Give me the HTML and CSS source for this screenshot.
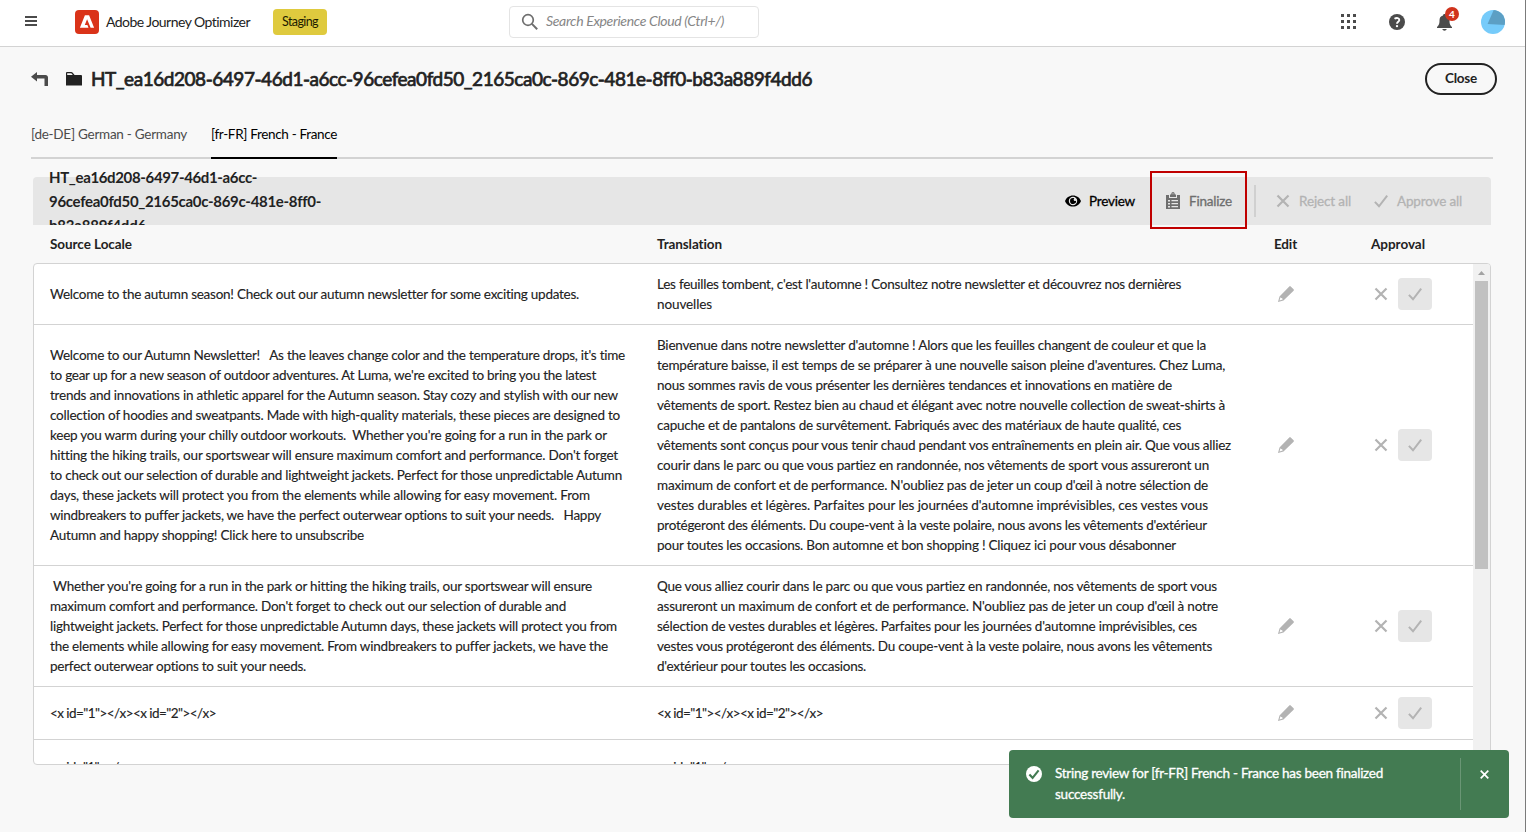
FILE: index.html
```html
<!DOCTYPE html>
<html lang="en">
<head>
<meta charset="utf-8">
<title>Adobe Journey Optimizer</title>
<link rel="stylesheet" href="styles.css">
</head>
<body>
<svg class="defs" width="0" height="0">
  <symbol id="pencil" viewBox="0 0 18 18"><path d="M12.300 1.400q.7-.7 1.400 0l2.900 2.900q.7.7 0 1.400L6.500 15.600 1 17l1.500-5.600zM3.500 12.300l-1 3.200 3.200-.9-.5-1.300-1-.2z" fill-rule="evenodd"/></symbol>
  <symbol id="cross" viewBox="0 0 14 14"><path d="M1.500 1.500l11 11M12.500 1.500l-11 11" fill="none" stroke="currentColor" stroke-width="2.200"/></symbol>
  <symbol id="check" viewBox="0 0 14 14"><path d="M.9 7.900l4.100 4.400L13.200 1.700" fill="none" stroke="currentColor" stroke-width="2"/></symbol>
</svg>
<div class="app">
  <header class="topbar">
    <div class="brand">
      <svg class="menu" width="12" height="11" viewBox="0 0 12 11"><path d="M0 1h12M0 5h12M0 9h12" stroke="#4b4b4b" stroke-width="2"/></svg>
      <svg class="logo" width="24" height="24" viewBox="0 0 24 24"><rect width="24" height="24" rx="4" fill="#da3319"/><path d="M9.900 5.200h4.200l5 12.500h-3.500L12.100 9.300l-2.300 5.600h2.600l1.100 2.800H4.900z" fill="#fff"/></svg>
      <span class="product" data-w="144">Adobe Journey Optimizer</span>
      <span class="badge"><span data-w="36">Staging</span></span>
    </div>
    <div class="search">
      <svg width="18" height="18" viewBox="0 0 18 18" fill="none" stroke="#6e6e6e" stroke-width="1.700"><circle cx="7" cy="7" r="5.300"/><path d="M10.900 10.900l5.300 5.300" stroke-width="2"/></svg>
      <span data-w="178">Search Experience Cloud (Ctrl+/)</span>
    </div>
    <div class="tools">
      <svg width="15" height="15" viewBox="0 0 15 15" fill="#4b4b4b"><path d="M0 0h3v3H0zM6 0h3v3H6zM12 0h3v3h-3zM0 6h3v3H0zM6 6h3v3H6zM12 6h3v3h-3zM0 12h3v3H0zM6 12h3v3H6zM12 12h3v3h-3z"/></svg>
      <span class="help"><svg width="16" height="16" viewBox="0 0 16 16"><circle cx="8" cy="8" r="8" fill="#4b4b4b"/><path d="M5.500 4.800C7.700 3.300 10.300 3.900 10.300 6c0 1.700-2.300 1.900-2.300 3.700" fill="none" stroke="#fff" stroke-width="1.900"/><circle cx="8" cy="12.100" r="1.200" fill="#fff"/></svg></span>
      <span class="bell"><svg width="16" height="17" viewBox="0 0 16 17" fill="#4b4b4b"><path d="M7.500 0c1 0 1.500.7 1.500 1.500 2.600.6 3.500 2.700 3.500 5 0 4 .8 4.800 2.500 6.500v1H0v-1c1.700-1.700 2.500-2.500 2.500-6.500 0-2.300.9-4.400 3.500-5C6 .7 6.500 0 7.500 0zM5.300 15h4.400c-.5 2.200-3.900 2.200-4.400 0z"/></svg><b class="count">4</b></span>
      <svg class="avatar" width="24" height="24" viewBox="0 0 24 24"><defs><clipPath id="av"><circle cx="12" cy="12" r="12"/></clipPath></defs><g clip-path="url(#av)"><path fill="#76cbfa" d="M0 0h24v24H0z"/><path fill="#5c9fc4" d="M12.700 0H24v15L6.600 14z"/></g></svg>
    </div>
  </header>

  <div class="page-head">
    <svg class="back" width="18" height="16" viewBox="0 0 18 16" fill="#4b4b4b"><path d="M6 0v3h8.500c1.500 0 2.500 1 2.500 2.500V14h-3.500V6.500H6v3L0 4.800z"/></svg>
    <svg class="folder" width="16" height="14" viewBox="0 0 16 14" fill="#222"><path d="M0 3V1Q0 0 1 0h4.500q.5 0 1 .5L8.600 3H15q1 0 1 1v9.400H0z"/><path d="M1.200 3V1.200h4.100L6.800 3z" fill="#f8f8f8"/></svg>
    <h1><span data-w="721">HT_ea16d208-6497-46d1-a6cc-96cefea0fd50_2165ca0c-869c-481e-8ff0-b83a889f4dd6</span></h1>
    <button class="close"><span data-w="32">Close</span></button>
  </div>

  <nav class="tabs">
    <a class="tab"><span data-w="156">[de-DE] German - Germany</span></a>
    <a class="tab active"><span data-w="126">[fr-FR] French - France</span></a>
  </nav>

  <section class="panel">
    <div class="toolbar">
      <h2><span data-w="208">HT_ea16d208-6497-46d1-a6cc-</span><br><span data-w="272">96cefea0fd50_2165ca0c-869c-481e-8ff0-</span><br><span data-w="97">b83a889f4dd6</span></h2>
      <div class="actions">
        <span class="action preview"><svg width="16" height="12" viewBox="0 0 16 12"><path fill-rule="evenodd" d="M8 .4c3.800 0 6.700 2.200 8 5.600-1.300 3.400-4.200 5.600-8 5.600S1.300 9.400 0 6C1.300 2.600 4.200.4 8 .4zm0 1.400a4.200 4.200 0 1 0 0 8.400 4.200 4.200 0 0 0 0-8.400z"/><path d="M8 3c.5 0 .9.100 1.300.3A1.600 1.600 0 0 0 9.600 6c.6.300 1.200 0 1.400-.5A3 3 0 1 1 8 3z"/></svg><span data-w="46">Preview</span></span>
        <span class="action finalize"><svg width="14" height="17" viewBox="0 0 14 17"><path fill-rule="evenodd" d="M0 3h3v3h8V3h3v14H0zM2 8v1.500h2V8zm3.500 0v1.300H12V8zM2 11v1.500h2V11zm3.500 0v1.300H12V11zM2 14v1.500h2V14zm3.500 0v1.300H12V14z"/><path fill-rule="evenodd" d="M4 5V2.500h1.200c.1-3.300 3.500-3.300 3.600 0H10V5zm2.300-2.700h1.400c-.1-1.300-1.300-1.300-1.400 0z"/></svg><span data-w="43">Finalize</span></span>
        <i class="divider"></i>
        <span class="action reject"><svg width="14" height="14"><use href="#cross"/></svg><span data-w="52">Reject all</span></span>
        <span class="action approve"><svg width="14" height="14"><use href="#check"/></svg><span data-w="65">Approve all</span></span>
      </div>
      <div class="highlight"></div>
    </div>

    <div class="thead">
      <span><span data-w="82">Source Locale</span></span><span><span data-w="65">Translation</span></span><span><span data-w="23">Edit</span></span><span><span data-w="54">Approval</span></span>
    </div>

    <div class="table">
      <div class="rows">
        <div class="row">
          <p><span data-w="529">Welcome to the autumn season! Check out our autumn newsletter for some exciting updates.</span></p>
          <p><span data-w="524">Les feuilles tombent, c'est l'automne ! Consultez notre newsletter et découvrez nos dernières</span><br><span data-w="55">nouvelles</span></p>
          <svg class="edit" width="18" height="18"><use href="#pencil"/></svg>
          <div class="approval"><svg width="14" height="14"><use href="#cross"/></svg><span class="ok"><svg width="14" height="14"><use href="#check"/></svg></span></div>
        </div>
        <div class="row">
          <p><span data-w="575">Welcome to our Autumn Newsletter! &nbsp; As the leaves change color and the temperature drops, it's time</span><br><span data-w="546">to gear up for a new season of outdoor adventures. At Luma, we're excited to bring you the latest</span><br><span data-w="568">trends and innovations in athletic apparel for the Autumn season. Stay cozy and stylish with our new</span><br><span data-w="570">collection of hoodies and sweatpants. Made with high-quality materials, these pieces are designed to</span><br><span data-w="557">keep you warm during your chilly outdoor workouts. &nbsp;Whether you're going for a run in the park or</span><br><span data-w="568">hitting the hiking trails, our sportswear will ensure maximum comfort and performance. Don't forget</span><br><span data-w="572">to check out our selection of durable and lightweight jackets. Perfect for those unpredictable Autumn</span><br><span data-w="540">days, these jackets will protect you from the elements while allowing for easy movement. From</span><br><span data-w="551">windbreakers to puffer jackets, we have the perfect outerwear options to suit your needs. &nbsp; Happy</span><br><span data-w="314">Autumn and happy shopping! Click here to unsubscribe</span></p>
          <p><span data-w="549">Bienvenue dans notre newsletter d'automne ! Alors que les feuilles changent de couleur et que la</span><br><span data-w="568">température baisse, il est temps de se préparer à une nouvelle saison pleine d'aventures. Chez Luma,</span><br><span data-w="515">nous sommes ravis de vous présenter les dernières tendances et innovations en matière de</span><br><span data-w="568">vêtements de sport. Restez bien au chaud et élégant avec notre nouvelle collection de sweat-shirts à</span><br><span data-w="524">capuche et de pantalons de survêtement. Fabriqués avec des matériaux de haute qualité, ces</span><br><span data-w="574">vêtements sont conçus pour vous tenir chaud pendant vos entraînements en plein air. Que vous alliez</span><br><span data-w="552">courir dans le parc ou que vous partiez en randonnée, nos vêtements de sport vous assureront un</span><br><span data-w="551">maximum de confort et de performance. N'oubliez pas de jeter un coup d'œil à notre sélection de</span><br><span data-w="551">vestes durables et légères. Parfaites pour les journées d'automne imprévisibles, ces vestes vous</span><br><span data-w="550">protégeront des éléments. Du coupe-vent à la veste polaire, nous avons les vêtements d'extérieur</span><br><span data-w="519">pour toutes les occasions. Bon automne et bon shopping ! Cliquez ici pour vous désabonner</span></p>
          <svg class="edit" width="18" height="18"><use href="#pencil"/></svg>
          <div class="approval"><svg width="14" height="14"><use href="#cross"/></svg><span class="ok"><svg width="14" height="14"><use href="#check"/></svg></span></div>
        </div>
        <div class="row">
          <p><span data-w="542">&nbsp;Whether you're going for a run in the park or hitting the hiking trails, our sportswear will ensure</span><br><span data-w="516">maximum comfort and performance. Don't forget to check out our selection of durable and</span><br><span data-w="567">lightweight jackets. Perfect for those unpredictable Autumn days, these jackets will protect you from</span><br><span data-w="558">the elements while allowing for easy movement. From windbreakers to puffer jackets, we have the</span><br><span data-w="256">perfect outerwear options to suit your needs.</span></p>
          <p><span data-w="560">Que vous alliez courir dans le parc ou que vous partiez en randonnée, nos vêtements de sport vous</span><br><span data-w="561">assureront un maximum de confort et de performance. N'oubliez pas de jeter un coup d'œil à notre</span><br><span data-w="540">sélection de vestes durables et légères. Parfaites pour les journées d'automne imprévisibles, ces</span><br><span data-w="555">vestes vous protégeront des éléments. Du coupe-vent à la veste polaire, nous avons les vêtements</span><br><span data-w="209">d'extérieur pour toutes les occasions.</span></p>
          <svg class="edit" width="18" height="18"><use href="#pencil"/></svg>
          <div class="approval"><svg width="14" height="14"><use href="#cross"/></svg><span class="ok"><svg width="14" height="14"><use href="#check"/></svg></span></div>
        </div>
        <div class="row">
          <p><span data-w="166">&lt;x id="1"&gt;&lt;/x&gt;&lt;x id="2"&gt;&lt;/x&gt;</span></p>
          <p><span data-w="166">&lt;x id="1"&gt;&lt;/x&gt;&lt;x id="2"&gt;&lt;/x&gt;</span></p>
          <svg class="edit" width="18" height="18"><use href="#pencil"/></svg>
          <div class="approval"><svg width="14" height="14"><use href="#cross"/></svg><span class="ok"><svg width="14" height="14"><use href="#check"/></svg></span></div>
        </div>
        <div class="row last">
          <p><span data-w="82">&lt;x id="1"&gt;&lt;/x&gt;</span></p>
          <p><span data-w="82">&lt;x id="1"&gt;&lt;/x&gt;</span></p>
        </div>
      </div>
      <div class="scrollbar"><svg width="7" height="4" viewBox="0 0 7 4"><path d="M3.500 0L7 4H0z" fill="#a3a3a3"/></svg><div class="thumb"></div></div>
    </div>
  </section>

  <div class="toast">
    <svg class="done" width="16" height="16" viewBox="0 0 16 16"><circle cx="8" cy="8" r="8" fill="#fff"/><path d="M3.400 8.500l3.200 3.300 6-7.400" fill="none" stroke="#437b52" stroke-width="2.100"/></svg>
    <p><span data-w="328">String review for [fr-FR] French - France has been finalized</span><br><span data-w="70">successfully.</span></p>
    <div class="dismiss"><svg viewBox="0 0 9 9"><path d="M.7.7l7.600 7.600M8.300.7L.7 8.300" stroke="#fff" stroke-width="1.700"/></svg></div>
  </div>
</div>
<script src="fit.js"></script>
</body>
</html>
```

FILE: fit.js
```js
// Tracks each line of text so that it fills its measure (data-w, in pixels).
document.querySelectorAll('[data-w]').forEach(function (el) {
  var natural = el.getBoundingClientRect().width;
  var gap = (Number(el.dataset.w) - natural) / el.textContent.length;
  el.style.letterSpacing = gap.toFixed(4) + 'px';
});
```

FILE: styles.css
```css
* { box-sizing: border-box; }
body { margin: 0; background: #f8f8f8; color: #222; font: 13.5px/20px Lato, "Open Sans", sans-serif; font-variant-ligatures: none; }
.defs { position: absolute; }
svg { display: block; flex: none; }
p, h1, h2 { margin: 0; }
[data-w] { display: inline-block; white-space: pre; }
.row p { -webkit-text-stroke: .12px; }
.app { position: relative; width: 1526px; height: 832px; overflow: hidden; border-right: 1px solid #7b7b7b; }

.topbar { height: 47px; display: grid; grid-template-columns: 509px 250px 1fr; background: #fff; border-bottom: 1px solid #d3d3d3; }
.brand { display: flex; align-items: center; padding: 0 0 3px 25px; }
.logo { margin: 1px 7px 0 38px; }
.product { font-size: 14px; }
.badge { margin: 1px 0 0 23px; width: 54px; height: 26px; border-radius: 4px; background: #dfca3e; color: #1c1c00; font-size: 12.500px; line-height: 26px; text-align: center; }
.search { height: 32px; margin-top: 6px; border: 1px solid #e4e4e4; border-radius: 4px; display: flex; align-items: center; padding-left: 11px; gap: 7px; color: #868686; font-style: italic; font-size: 14px; }
.search > span { margin-top: -2px; }
.tools { display: flex; align-items: center; justify-content: flex-end; padding: 0 20px 3px 0; }
.help { margin: 0 32px 0 33px; }
.bell { position: relative; margin: 2px 28px 0 0; }
.count { position: absolute; left: 8px; top: -7px; width: 14px; height: 14px; border-radius: 50%; background: #d0331c; color: #fff; font-size: 10px; line-height: 14px; text-align: center; }

.page-head { height: 64px; display: flex; align-items: center; padding: 0 28px 0 31px; }
.back { margin-top: 2px; }
.folder { margin: 0 9px 0 17px; }
h1 { flex: 1; font-size: 19px; line-height: 24px; font-weight: 400; -webkit-text-stroke: .7px #222; }
.close { width: 72px; height: 32px; padding: 0 0 2px; border: 2px solid #222; border-radius: 16px; background: #f8f8f8; color: #222; font: bold 13.500px/20px Lato, sans-serif; }

.tabs { height: 48px; margin: 0 32px 0 31px; border-bottom: 2px solid #d3d3d3; display: flex; gap: 24px; }
.tab { height: 48px; padding-top: 13px; color: #4b4b4b; }
.tab.active { color: #000; border-bottom: 2px solid #000; }

.panel { margin: 18px 34px 0 33px; }
.toolbar { position: relative; height: 48px; padding-left: 16px; display: flex; justify-content: space-between; background: #e6e6e6; border-radius: 4px 4px 0 0; }
h2 { margin-top: -12px; height: 60px; overflow: hidden; white-space: nowrap; font-size: 15px; line-height: 24px; font-weight: bold; }
.actions { display: flex; align-items: center; padding-right: 29px; }
.action { display: flex; align-items: center; gap: 8px; color: #b3b3b3; fill: currentColor; font-weight: 400; -webkit-text-stroke: .3px; }
.preview { color: #000; }
.finalize { color: #6e6e6e; margin-left: 31px; gap: 9px; }
.finalize svg { margin-top: -2px; }
.divider { width: 2px; height: 32px; background: #d0d0d0; margin: 0 20px 0 22px; }
.reject { gap: 9px; }
.approve { margin-left: 23px; gap: 9px; }
.highlight { position: absolute; left: 1117px; top: -6px; width: 97px; height: 58px; border: 2px solid #c00000; }

.thead, .row { display: grid; grid-template-columns: 607px 617px 97px 1fr; padding-left: 17px; }
.thead { height: 38px; align-items: center; font-weight: bold; }
.table { height: 502px; display: flex; border: 1px solid #d3d3d3; border-radius: 4px; background: #fff; overflow: hidden; }
.rows { flex: 1; }
.row { padding: 10px 0 10px 16px; min-height: 53px; align-items: center; border-bottom: 1px solid #d3d3d3; }
.row.last { padding-top: 12px; }
.edit { fill: #b3b3b3; margin-left: 3px; }
.approval { display: flex; align-items: center; gap: 10px; color: #b3b3b3; padding-left: 3px; }
.ok { width: 34px; height: 32px; border-radius: 4px; background: #e6e6e6; display: grid; place-items: center; }
.scrollbar { width: 17px; background: #f1f1f1; padding-top: 7px; }
.scrollbar svg { margin-left: 5px; }
.thumb { width: 13px; height: 288px; margin: 6px 0 0 2px; background: #c1c1c1; }

.toast { position: absolute; left: 1009px; top: 750px; width: 500px; height: 68px; border-radius: 4px; background: #437b52; color: #fff; display: flex; padding: 8px 0; }
.done { margin: 8px 13px 0 17px; }
.toast p { flex: 1; padding-top: 5px; line-height: 21px; -webkit-text-stroke: .3px; }
.dismiss { width: 49px; border-left: 1px solid #6a9675; padding: 12px 0 0 19px; }
.dismiss svg { width: 9px; height: 9px; }
```
